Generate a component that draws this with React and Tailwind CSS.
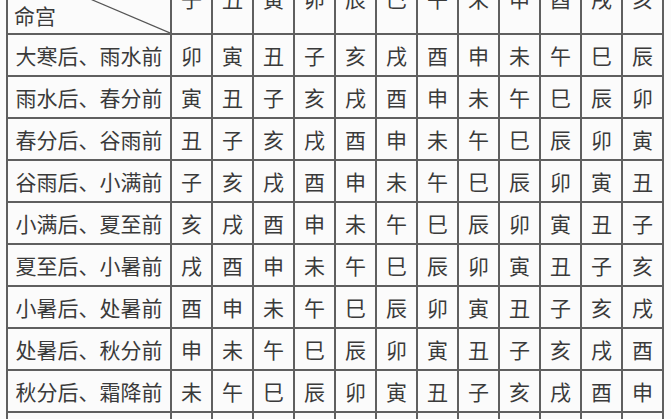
const branches = ['子', '丑', '寅', '卯', '辰', '巳', '午', '未', '申', '酉', '戌', '亥']
const cycle = ['卯', '寅', '丑', '子', '亥', '戌', '酉', '申', '未', '午', '巳', '辰']

const periods = [
  '大寒后、雨水前',
  '雨水后、春分前',
  '春分后、谷雨前',
  '谷雨后、小满前',
  '小满后、夏至前',
  '夏至后、小暑前',
  '小暑后、处暑前',
  '处暑后、秋分前',
  '秋分后、霜降前',
  '霜降后、立冬前',
]

const font = { fontFamily: '"Noto Sans CJK SC", "Noto Sans", sans-serif' }

export default function App() {
  return (
    <div className="w-[671px] h-[419px] overflow-hidden bg-[#fbfbfb]" style={font}>
      <div className="ml-[6px] -mt-[38px] w-[658px] grid grid-cols-[162px_repeat(12,39px)] grid-rows-[69px] auto-rows-[40px] gap-[2px] p-[2px] bg-[#5f5f5f] text-[#3a3a3a]">
        {/* Header */}
        <div className="relative bg-[#fbfbfb]">
          <svg className="absolute inset-0 w-full h-full" preserveAspectRatio="none" viewBox="0 0 162 69">
            <line x1="0" y1="0" x2="162" y2="69" stroke="#555" strokeWidth="1.2" />
          </svg>
          <span className="absolute left-[6px] bottom-[7px] text-[21px] leading-none">命宫</span>
        </div>
        {branches.map((b) => (
          <div key={b} className="bg-[#fbfbfb] flex items-center justify-center text-[21px] leading-none">
            {b}
          </div>
        ))}

        {/* Rows */}
        {periods.map((p, r) => (
          <div key={p} className="contents">
            <div className="bg-[#fbfbfb] flex items-center justify-center text-[21px] leading-none">
              {p}
            </div>
            {branches.map((_, c) => (
              <div key={c} className="bg-[#fbfbfb] flex items-center justify-center text-[21px] leading-none">
                {cycle[(r + c) % 12]}
              </div>
            ))}
          </div>
        ))}
      </div>
    </div>
  )
}
